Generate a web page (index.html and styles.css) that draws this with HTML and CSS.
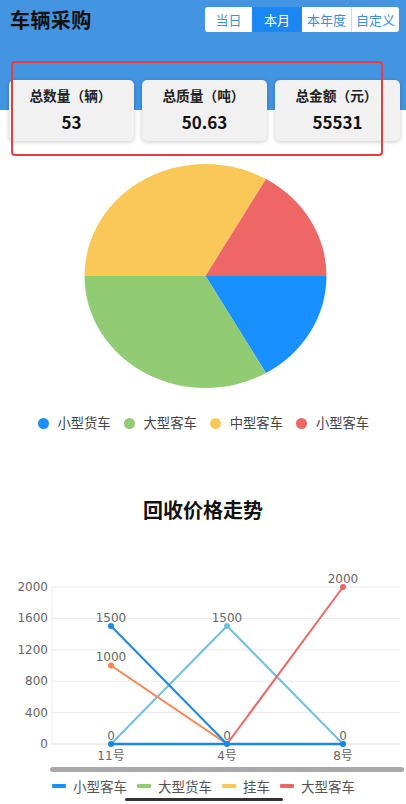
FILE: index.html
```html
<!DOCTYPE html>
<html lang="zh">
<head>
<meta charset="utf-8">
<title>车辆采购</title>
<link rel="stylesheet" href="styles.css">
</head>
<body>
<div class="page">
  <section class="top">
    <div class="toolbar">
      <h1 class="title">车辆采购</h1>
      <div class="seg">
        <span class="seg-btn w47">当日</span>
        <span class="seg-btn w50 active">本月</span>
        <span class="seg-btn w49">本年度</span>
        <span class="seg-btn w48 sep">自定义</span>
      </div>
    </div>
    <div class="cards">
      <div class="card"><div class="card-label">总数量（辆）</div><div class="card-value">53</div></div>
      <div class="card"><div class="card-label">总质量（吨）</div><div class="card-value">50.63</div></div>
      <div class="card"><div class="card-label">总金额（元）</div><div class="card-value">55531</div></div>
    </div>
    <div class="highlight"></div>
  </section>

  <svg class="pie" width="406" height="240" viewBox="0 160 406 240">
    <path d="M205.5 276 L326.5 276 A121 112 0 0 1 266 373 Z" fill="#1890ff"/>
    <path d="M205.5 276 L266 373 A121 112 0 0 1 84.5 276 Z" fill="#91cb74"/>
    <path d="M205.5 276 L84.5 276 A121 112 0 0 1 266 179 Z" fill="#fac858"/>
    <path d="M205.5 276 L266 179 A121 112 0 0 1 326.5 276 Z" fill="#ee6666"/>
  </svg>

  <div class="pie-legend">
    <span class="pl-item"><i class="dot c-blue"></i>小型货车</span>
    <span class="pl-item"><i class="dot c-green"></i>大型客车</span>
    <span class="pl-item"><i class="dot c-yellow"></i>中型客车</span>
    <span class="pl-item"><i class="dot c-red"></i>小型客车</span>
  </div>

  <h2 class="chart-title">回收价格走势</h2>

  <svg class="line" width="406" height="240" viewBox="0 524 406 240">
    <g stroke="#ebebeb" stroke-width="1">
      <line x1="52" y1="587" x2="400" y2="587"/>
      <line x1="52" y1="618.4" x2="400" y2="618.4"/>
      <line x1="52" y1="649.8" x2="400" y2="649.8"/>
      <line x1="52" y1="681.2" x2="400" y2="681.2"/>
      <line x1="52" y1="712.6" x2="400" y2="712.6"/>
      <line x1="52" y1="587" x2="52" y2="744"/>
    </g>
    <line x1="52" y1="744" x2="400" y2="744" stroke="#dcdcdc" stroke-width="1"/>
    <g class="axis-text" text-anchor="end">
      <text x="48" y="591">2000</text>
      <text x="48" y="622.4">1600</text>
      <text x="48" y="653.8">1200</text>
      <text x="48" y="685.2">800</text>
      <text x="48" y="716.6">400</text>
      <text x="48" y="748">0</text>
    </g>
    <g class="axis-text" text-anchor="middle">
      <text x="111" y="760">11号</text>
      <text x="227" y="760">4号</text>
      <text x="343" y="760">8号</text>
    </g>
    <g fill="none" stroke-width="2" stroke-linejoin="round">
      <polyline points="111,744 227,626 343,744" stroke="#73c0de"/>
      <polyline points="111,665.5 227,744" stroke="#fc8452"/>
      <polyline points="227,744 343,587" stroke="#ee6666"/>
      <polyline points="111,626 227,744" stroke="#1c86e6"/>
      <polyline points="111,744 343,744" stroke="#1c86e6" stroke-width="2.5"/>
    </g>
    <g>
      <circle cx="227" cy="626" r="3" fill="#73c0de"/>
      <circle cx="343" cy="744" r="3" fill="#73c0de"/>
      <circle cx="111" cy="665.5" r="3" fill="#fc8452"/>
      <circle cx="343" cy="587" r="3" fill="#ee6666"/>
      <circle cx="111" cy="626" r="3" fill="#1c86e6"/>
      <circle cx="111" cy="744" r="3" fill="#1c86e6"/>
      <circle cx="227" cy="744" r="3" fill="#1c86e6"/>
      <circle cx="343" cy="744" r="3" fill="#1c86e6"/>
    </g>
    <g class="axis-text" text-anchor="middle">
      <text x="111" y="622">1500</text>
      <text x="111" y="661">1000</text>
      <text x="111" y="740">0</text>
      <text x="227" y="622">1500</text>
      <text x="227" y="740">0</text>
      <text x="343" y="740">0</text>
      <text x="343" y="583">2000</text>
    </g>
  </svg>

  <div class="scrollbar"></div>

  <div class="line-legend">
    <span class="ll-item"><i class="bar c-blue"></i>小型客车</span>
    <span class="ll-item"><i class="bar c-green"></i>大型货车</span>
    <span class="ll-item"><i class="bar c-yellow"></i>挂车</span>
    <span class="ll-item"><i class="bar c-red"></i>大型客车</span>
  </div>

  <div class="home-bar"></div>
</div>
</body>
</html>
```

FILE: styles.css
```css
* { box-sizing: border-box; }
html, body { margin: 0; padding: 0; background: #fff; }
body {
  font-family: "Noto Sans CJK SC", "Noto Sans", sans-serif;
  color: #222;
  width: 406px;
  height: 804px;
  overflow: hidden;
}
.page { width: 406px; }

.top {
  position: relative;
  height: 160px;
  background: linear-gradient(#4394e1 0, #4394e1 110px, #fff 110px);
}
.toolbar {
  display: flex;
  align-items: center;
  justify-content: space-between;
  padding: 7px 7px 0 10px;
  height: 32px;
}
.title {
  margin: 0;
  font-size: 20px;
  line-height: 25px;
  font-weight: 700;
  color: #111;
  letter-spacing: 0.4px;
}
.seg {
  display: flex;
  height: 25px;
  background: #fff;
  border-radius: 3px;
  overflow: hidden;
}
.seg-btn {
  display: flex;
  align-items: center;
  justify-content: center;
  font-size: 13px;
  color: #3d8fe0;
  height: 25px;
}
.seg-btn.active { background: #1a87f2; color: #fff; }
.seg-btn.sep { border-left: 1px solid #c9dcf3; }
.w47 { width: 47px; }
.w50 { width: 50px; }
.w49 { width: 49px; }
.w48 { width: 48px; }

.cards {
  display: flex;
  gap: 8px;
  padding: 0 6px 0 9px;
  margin-top: 48px;
}
.card {
  width: 125px;
  height: 61px;
  background: #f1f1f1;
  border-radius: 5px;
  box-shadow: 0 1px 4px rgba(0, 0, 0, 0.22);
  display: flex;
  flex-direction: column;
  align-items: center;
  padding-top: 5px;
}
.card-label {
  font-size: 13.7px;
  font-weight: 700;
  line-height: 20px;
  color: #222;
  margin-left: -2px;
}
.card-value {
  font-size: 17px;
  font-weight: 700;
  line-height: 24px;
  margin-top: 5px;
  color: #111;
}
.highlight {
  position: absolute;
  left: 11px;
  top: 61px;
  width: 372px;
  height: 95px;
  border: 2.5px solid #ea3c40;
  border-radius: 4px;
}

.pie { display: block; }

.pie-legend {
  display: flex;
  justify-content: center;
  gap: 13.5px;
  margin-top: 15px;
  height: 16px;
  padding-left: 1px;
}
.pl-item {
  display: flex;
  align-items: center;
  font-size: 13.3px;
  line-height: 16px;
  color: #444;
}
.dot {
  width: 11px;
  height: 11px;
  border-radius: 50%;
  margin-right: 8.5px;
  display: inline-block;
}
.c-blue { background: #1890ff; }
.c-green { background: #91cb74; }
.c-yellow { background: #fac858; }
.c-red { background: #ee6666; }

.chart-title {
  margin: 65px 0 0;
  text-align: center;
  font-size: 20px;
  line-height: 28px;
  font-weight: 700;
  color: #111;
}

.line { display: block; }
.axis-text {
  font-family: "DejaVu Sans", "Noto Sans CJK SC", sans-serif;
  font-size: 12px;
  fill: #666;
}

.scrollbar {
  margin: 3px 0 0 50px;
  width: 354px;
  height: 5px;
  border-radius: 3px;
  background: #a9a9a9;
}

.line-legend {
  display: flex;
  margin: 6px 0 0 52px;
  gap: 10px;
  height: 16px;
}
.ll-item {
  display: flex;
  align-items: center;
  font-size: 13.5px;
  line-height: 16px;
  color: #555;
}
.bar {
  display: inline-block;
  width: 14px;
  height: 4px;
  margin-right: 7px;
  border-radius: 1px;
}

.home-bar {
  margin: 4px 0 0 125px;
  width: 158px;
  height: 3px;
  border-radius: 2px;
  background: #333;
}
```
